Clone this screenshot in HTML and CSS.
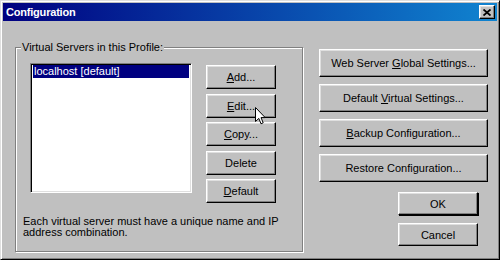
FILE: index.html
```html
<!DOCTYPE html>
<html>
<head>
<meta charset="utf-8">
<title>Configuration</title>
<link rel="stylesheet" href="styles.css">
</head>
<body>
<div class="window">
  <div class="titlebar">
    <span class="title">Configuration</span>
    <button class="close" aria-label="Close">
      <svg width="8" height="7" viewBox="0 0 8 7"><path d="M0.5 0.5 L7.5 6.5 M7.5 0.5 L0.5 6.5" stroke="#000" stroke-width="1.8" fill="none"/></svg>
    </button>
  </div>
  <div class="content">
    <div class="group">
      <span class="group-label">Virtual Servers in this Profile:</span>
      <div class="group-row">
        <div class="listbox">
          <div class="item selected">localhost [default]</div>
        </div>
        <div class="side-buttons">
          <button class="btn small"><u>A</u>dd...</button>
          <button class="btn small edit"><u>E</u>dit...
            <svg class="cursor" width="11" height="18" viewBox="0 0 11 18"><path d="M0.5 0.5 L0.5 14.5 L3.8 11.4 L6 16.8 L8.2 15.8 L6 10.6 L10.2 10.6 Z" fill="#fff" stroke="#000" stroke-width="1"/></svg>
          </button>
          <button class="btn small"><u>C</u>opy...</button>
          <button class="btn small">Delete</button>
          <button class="btn small"><u>D</u>efault</button>
        </div>
      </div>
      <p class="note">Each virtual server must have a unique name and IP<br>address combination.</p>
    </div>
    <div class="right">
      <div class="big-buttons">
        <button class="btn big">Web Server <u>G</u>lobal Settings...</button>
        <button class="btn big">Default <u>V</u>irtual Settings...</button>
        <button class="btn big"><u>B</u>ackup Configuration...</button>
        <button class="btn big">Restore Configuration...</button>
      </div>
      <div class="ok-buttons">
        <button class="btn dlg default">OK</button>
        <button class="btn dlg">Cancel</button>
      </div>
    </div>
  </div>
</div>
</body>
</html>
```
FILE: styles.css
```css
* { box-sizing: border-box; }
html, body { margin: 0; padding: 0; }
body {
  width: 500px;
  height: 260px;
  background: #c0c0c0;
  font-family: "Liberation Sans", Arial, sans-serif;
  font-size: 11px;
  color: #000;
}
.window {
  width: 500px;
  height: 260px;
  background: #c0c0c0;
  border: 1px solid;
  border-color: #dfdfdf #000 #000 #dfdfdf;
  box-shadow: inset 1px 1px 0 #fff, inset -1px -1px 0 #808080;
  padding: 2px;
  display: flex;
  flex-direction: column;
}
.titlebar {
  height: 18px;
  background: linear-gradient(to right, #000080, #1084d0);
  display: flex;
  align-items: center;
  justify-content: space-between;
  padding: 0 2px 0 3px;
}
.title {
  color: #fff;
  font-weight: bold;
  font-size: 11px;
  letter-spacing: -0.2px;
}
.close {
  width: 16px;
  height: 14px;
  padding: 0;
  margin: 0;
  background: #c0c0c0;
  border: 1px solid;
  border-color: #fff #000 #000 #fff;
  box-shadow: inset -1px -1px 0 #808080, inset 1px 1px 0 #dfdfdf;
  display: flex;
  align-items: center;
  justify-content: center;
}
.content {
  display: flex;
  padding-left: 12px;
}
.group {
  position: relative;
  width: 288px;
  height: 205px;
  margin-top: 26px;
  border: 1px solid #808080;
  box-shadow: inset 1px 1px 0 #fff, 1px 1px 0 #fff;
  padding: 15px 0 0 14px;
}
.group-label {
  position: absolute;
  top: -7px;
  left: 5px;
  padding: 0 1px;
  background: #c0c0c0;
  line-height: 13px;
}
.group-row {
  display: flex;
  gap: 14px;
}
.listbox {
  width: 162px;
  height: 130px;
  background: #fff;
  border: 1px solid;
  border-color: #808080 #fff #fff #808080;
  box-shadow: inset 1px 1px 0 #000, inset -1px -1px 0 #dfdfdf;
  padding: 1px 2px;
}
.item {
  height: 13px;
  line-height: 13px;
  padding-left: 1px;
  white-space: nowrap;
}
.selected {
  background: #000080;
  color: #fff;
}
.side-buttons {
  display: flex;
  flex-direction: column;
  gap: 4.5px;
  margin-top: 2px;
}
.btn {
  font-family: "Liberation Sans", Arial, sans-serif;
  font-size: 11px;
  color: #000;
  background: #c0c0c0;
  border: 1px solid;
  border-color: #fff #000 #000 #fff;
  box-shadow: inset -1px -1px 0 #808080, inset 1px 1px 0 #dfdfdf;
  padding: 0;
  margin: 0;
  text-align: center;
}
.btn u { text-decoration-thickness: 1px; text-underline-offset: 1px; }
.small {
  width: 70px;
  height: 24px;
}
.edit { position: relative; }
.cursor {
  position: absolute;
  left: 48px;
  top: 12px;
}
.note {
  margin: 13px 0 0 -7px;
  line-height: 11px;
}
.right {
  margin-left: 16px;
  padding-top: 28px;
  display: flex;
  flex-direction: column;
}
.big-buttons {
  display: flex;
  flex-direction: column;
  gap: 7px;
}
.big {
  width: 169px;
  height: 28px;
}
.ok-buttons {
  display: flex;
  flex-direction: column;
  gap: 8px;
  margin-top: 10px;
  align-self: flex-end;
  margin-right: 10px;
}
.dlg {
  width: 80px;
  height: 23px;
}
.default {
  border-color: #fff #000 #000 #fff;
  box-shadow: inset -1px -1px 0 #808080, inset 1px 1px 0 #dfdfdf, 1px 1px 0 #000;
}
```
